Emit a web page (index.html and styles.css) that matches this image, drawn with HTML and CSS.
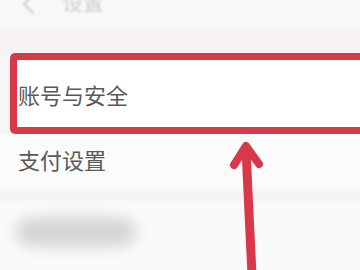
FILE: index.html
```html
<!DOCTYPE html>
<html lang="zh-CN">
<head>
<meta charset="utf-8">
<link rel="stylesheet" href="styles.css">
</head>
<body>
<div class="screen">
  <header class="topbar">
    <svg class="back" width="16" height="16" viewBox="0 0 16 16"><path d="M12 -4 L2 6 L12 16" fill="none" stroke="#cfcfcf" stroke-width="2"/></svg>
    <span class="title">设置</span>
  </header>
  <div class="band"></div>
  <div class="list">
    <div class="row row-hl"><span class="label">账号与安全</span></div>
    <div class="row row-pay"><span class="label">支付设置</span></div>
    <div class="sep"></div>
    <div class="row row-blur"><span class="blob"></span></div>
  </div>
  <svg class="arrow" width="360" height="270" viewBox="0 0 360 270">
    <path d="M246 150 L252 275" stroke="#d8384a" stroke-width="9" stroke-linecap="round" fill="none"/>
    <path d="M234 165 L246 146 L259 164" stroke="#d8384a" stroke-width="8" stroke-linecap="round" stroke-linejoin="round" fill="none"/>
  </svg>
</div>
</body>
</html>
```

FILE: styles.css
```css
html, body {
  margin: 0;
  padding: 0;
}
body {
  width: 360px;
  height: 270px;
  overflow: hidden;
  background: #f6f6f6;
  font-family: "Noto Sans CJK SC", "Noto Sans", sans-serif;
}
.screen {
  position: relative;
  width: 360px;
  height: 270px;
  overflow: hidden;
}
.topbar {
  height: 28px;
  display: flex;
  align-items: flex-start;
  background: #f8f8f8;
  filter: blur(0.8px);
}
.back {
  margin-left: 22px;
  margin-top: -2px;
}
.title {
  margin-left: 24px;
  margin-top: -9px;
  font-size: 21px;
  line-height: 1;
  color: #cfcfcf;
}
.band {
  height: 25px;
  background: linear-gradient(#f9f3f1, #f6f4f3);
}
.list {
  display: flex;
  flex-direction: column;
  align-items: flex-start;
}
.row {
  display: flex;
  align-items: center;
  align-self: stretch;
}
.label {
  font-size: 22px;
  line-height: 1;
  color: #595959;
}
.row-hl {
  align-self: flex-start;
  flex-shrink: 0;
  margin-left: 10px;
  width: 370px;
  height: 81px;
  box-sizing: border-box;
  border: 7px solid #d8384a;
  border-radius: 5px;
  background: #ffffff;
  padding-left: 1px;
}
.row-pay {
  height: 56px;
  padding-left: 18px;
  padding-bottom: 6px;
  box-sizing: border-box;
  background: #fbfbfb;
}
.sep {
  align-self: stretch;
  height: 10px;
  background: linear-gradient(#f7f7f7, #f1f1f1);
  filter: blur(2px);
}
.row-blur {
  height: 70px;
  background: #fafafa;
  padding-left: 16px;
}
.blob {
  width: 120px;
  height: 30px;
  border-radius: 15px;
  background: #d6d6d6;
  filter: blur(7px);
  margin-top: -6px;
}
.arrow {
  position: absolute;
  left: 0;
  top: 0;
}
```
